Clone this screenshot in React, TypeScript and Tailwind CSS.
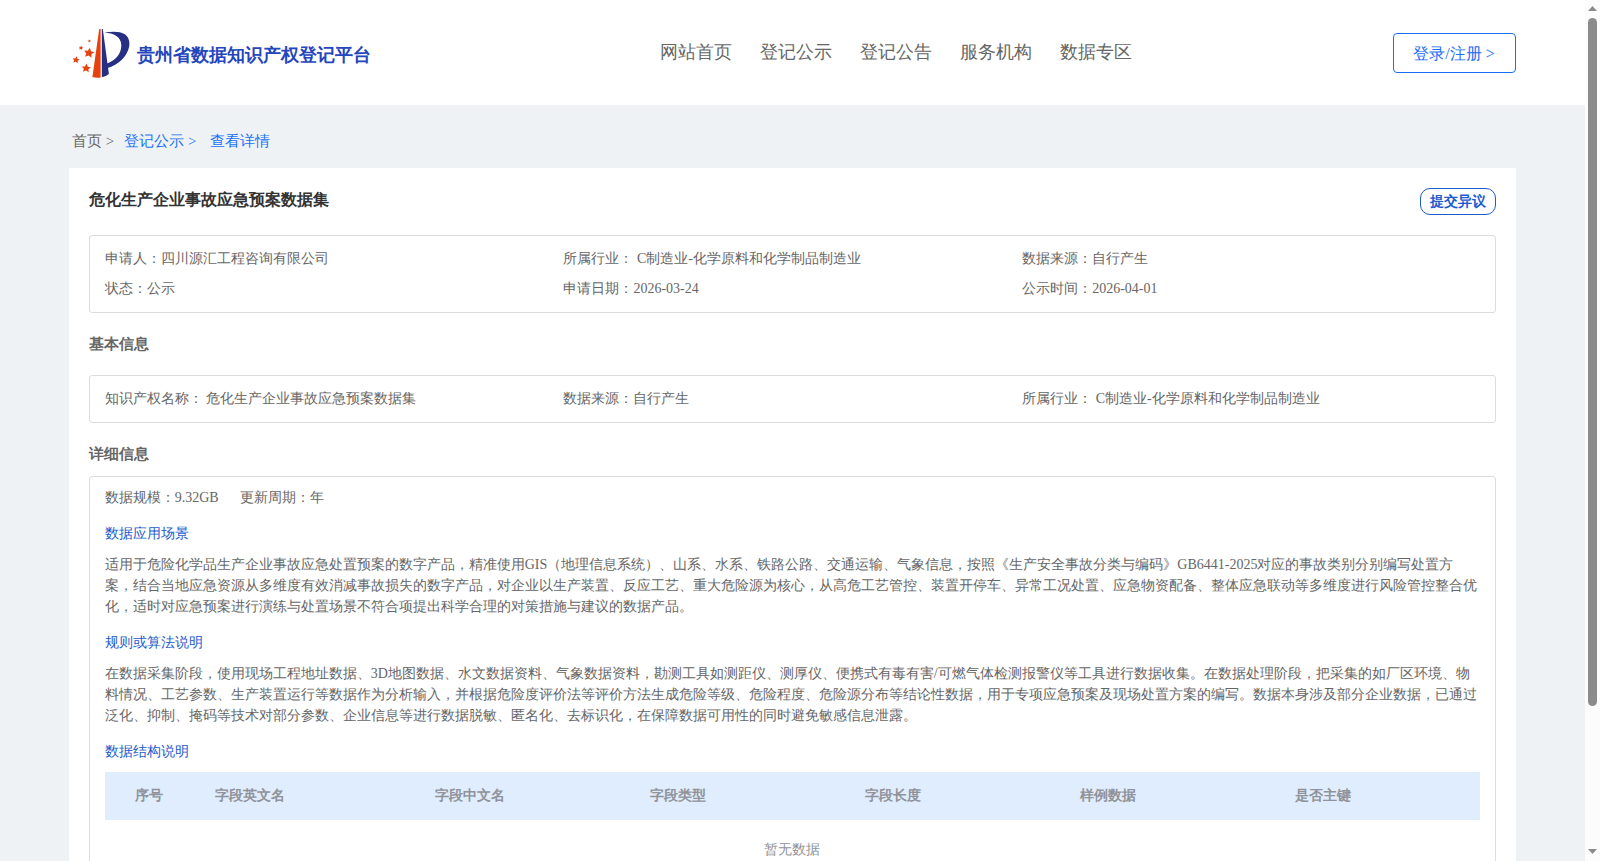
const NAV = ["网站首页", "登记公示", "登记公告", "服务机构", "数据专区"];

const SCENE =
  "适用于危险化学品生产企业事故应急处置预案的数字产品，精准使用GIS（地理信息系统）、山系、水系、铁路公路、交通运输、气象信息，按照《生产安全事故分类与编码》GB6441-2025对应的事故类别分别编写处置方案，结合当地应急资源从多维度有效消减事故损失的数字产品，对企业以生产装置、反应工艺、重大危险源为核心，从高危工艺管控、装置开停车、异常工况处置、应急物资配备、整体应急联动等多维度进行风险管控整合优化，适时对应急预案进行演练与处置场景不符合项提出科学合理的对策措施与建议的数据产品。";

const RULES =
  "在数据采集阶段，使用现场工程地址数据、3D地图数据、水文数据资料、气象数据资料，勘测工具如测距仪、测厚仪、便携式有毒有害/可燃气体检测报警仪等工具进行数据收集。在数据处理阶段，把采集的如厂区环境、物料情况、工艺参数、生产装置运行等数据作为分析输入，并根据危险度评价法等评价方法生成危险等级、危险程度、危险源分布等结论性数据，用于专项应急预案及现场处置方案的编写。数据本身涉及部分企业数据，已通过泛化、抑制、掩码等技术对部分参数、企业信息等进行数据脱敏、匿名化、去标识化，在保障数据可用性的同时避免敏感信息泄露。";

const STAR = "M0 -5 L1.5 -1.8 L4.8 -1.5 L2.4 0.8 L3 4 L0 2.4 L-3 4 L-2.4 0.8 L-4.8 -1.5 L-1.5 -1.8 Z";

function Logo() {
  return (
    <svg width="60" height="52" viewBox="0 0 60 52" className="block shrink-0">
      <path d="M27.2 1 H28.6 V49.4 Q24.5 50 20.4 49 Z" fill="#e5420f" />
      <path d="M29.8 1 H30.8 L36.9 46 Q34 48.6 29.8 49.2 Z" fill="#272f83" />
      <path d="M34.6 35.8 C44 32 49.5 25.5 49.3 17 C49 9 42 5.2 32.3 4.6 C46 2.4 57.3 4 57.4 15.5 C57.4 27 46 37.5 35.2 40 Z" fill="#272f83" />
      <g fill="#e5420f">
        <path d={STAR} transform="translate(17 25) rotate(10) scale(1.08)" />
        <path d={STAR} transform="translate(14.2 40.3) scale(.95) rotate(5)" />
        <path d={STAR} transform="translate(4 31.9) scale(.75) rotate(10)" />
        <path d={STAR} transform="translate(9 19.9) scale(.48) rotate(12)" />
        <path d={STAR} transform="translate(17.4 13) scale(.33)" />
      </g>
    </svg>
  );
}

function Scrollbar() {
  return (
    <aside className="flex w-[15px] shrink-0 flex-col items-center bg-[#fcfcfc]">
      <svg width="9" height="5" viewBox="0 0 9 5" className="mt-1.5 block shrink-0">
        <path d="M4.5 0 9 5H0z" fill="#8b8b8b" />
      </svg>
      <div className="mt-[7px] h-[688px] w-[9px] shrink-0 rounded-full bg-[#8b8b8b]" />
      <svg width="9" height="5" viewBox="0 0 9 5" className="mt-auto mb-[7px] block shrink-0">
        <path d="M0 0H9L4.5 5z" fill="#8b8b8b" />
      </svg>
    </aside>
  );
}

function Info({ items, className }: { items: string[]; className: string }) {
  return (
    <div className={`grid grid-cols-3 rounded-[3px] border border-[#dcdcdc] pr-[14.4px] pl-[15px] leading-[30px] ${className}`}>
      {items.map((t) => (
        <div key={t}>{t}</div>
      ))}
    </div>
  );
}

function Sub({ children }: { children: string }) {
  return <h3 className="text-[#1d5bcc] leading-[21px]">{children}</h3>;
}

export default function App() {
  return (
    <div className="flex h-[861px] w-[1600px] overflow-hidden bg-[#eef2f5] font-['Liberation_Serif',serif] text-sm text-[#666]">
      <div className="min-w-0 flex-1">
        <header className="flex h-[105px] items-start bg-white pr-[69px] pl-[72px]">
          <div className="mt-7 flex items-center">
            <Logo />
            <span className="ml-[5px] mt-[2px] text-[18px] leading-[26px] font-bold text-[#2446bc]">贵州省数据知识产权登记平台</span>
          </div>
          <nav className="mt-[38px] ml-auto flex gap-7 text-[18px] leading-7">
            {NAV.map((n) => (
              <a key={n}>{n}</a>
            ))}
          </nav>
          <button className="mt-[33px] ml-[260.7px] h-10 w-[123px] rounded-[4px] border border-[#1a6ef5] pt-px pr-px text-base text-[#1a6ef5]">登录/注册 &gt;</button>
        </header>
        <main className="px-[68.75px]">
          <div className="flex h-[63px] items-center pt-[11px] pl-[3.25px] text-[15px] text-[#1a73f5]">
            <span className="text-[#666]">首页 &gt;</span>
            <span className="ml-2.5">登记公示 &gt;</span>
            <span className="ml-[13.5px]">查看详情</span>
          </div>
          <section className="h-[720px] bg-white px-5 pt-5">
            <div className="flex h-[27px] justify-between">
              <h1 className="text-base leading-6 font-bold text-[#333]">危化生产企业事故应急预案数据集</h1>
              <button className="h-[27px] w-[76px] rounded-[10px] border border-[#1d5bcc] pr-px text-sm font-bold text-[#1d5bcc]">提交异议</button>
            </div>
            <Info
              className="mt-5 h-[78px] py-2"
              items={["申请人：四川源汇工程咨询有限公司", "所属行业： C制造业-化学原料和化学制品制造业", "数据来源：自行产生", "状态：公示", "申请日期：2026-03-24", "公示时间：2026-04-01"]}
            />
            <h2 className="mt-[19px] text-[15px] leading-6 font-bold">基本信息</h2>
            <Info className="mt-[19px] h-12 py-2" items={["知识产权名称： 危化生产企业事故应急预案数据集", "数据来源：自行产生", "所属行业： C制造业-化学原料和化学制品制造业"]} />
            <h2 className="mt-[19px] text-[15px] leading-6 font-bold">详细信息</h2>
            <div className="mt-2.5 h-[500px] rounded-[3px] border border-[#dcdcdc] px-[15px] pt-2.5 leading-[21px]">
              <div className="mb-[15px] flex gap-[21px]">
                <span>数据规模：9.32GB</span>
                <span>更新周期：年</span>
              </div>
              <Sub>数据应用场景</Sub>
              <p className="mt-2.5 mb-[15px]">{SCENE}</p>
              <Sub>规则或算法说明</Sub>
              <p className="mt-2.5 mb-[15px]">{RULES}</p>
              <Sub>数据结构说明</Sub>
              <div className="mt-2.5 flex h-12 items-center bg-[#e0edfe] pb-0.5 pl-[30px] font-bold text-[#909399]">
                <span className="w-20">序号</span>
                <span className="w-[220px]">字段英文名</span>
                <span className="w-[215px]">字段中文名</span>
                <span className="w-[215px]">字段类型</span>
                <span className="w-[215px]">字段长度</span>
                <span className="w-[215px]">样例数据</span>
                <span>是否主键</span>
              </div>
              <div className="pt-[19px] pr-[0.5px] text-center text-[#909399]">暂无数据</div>
            </div>
          </section>
        </main>
      </div>
      <Scrollbar />
    </div>
  );
}
